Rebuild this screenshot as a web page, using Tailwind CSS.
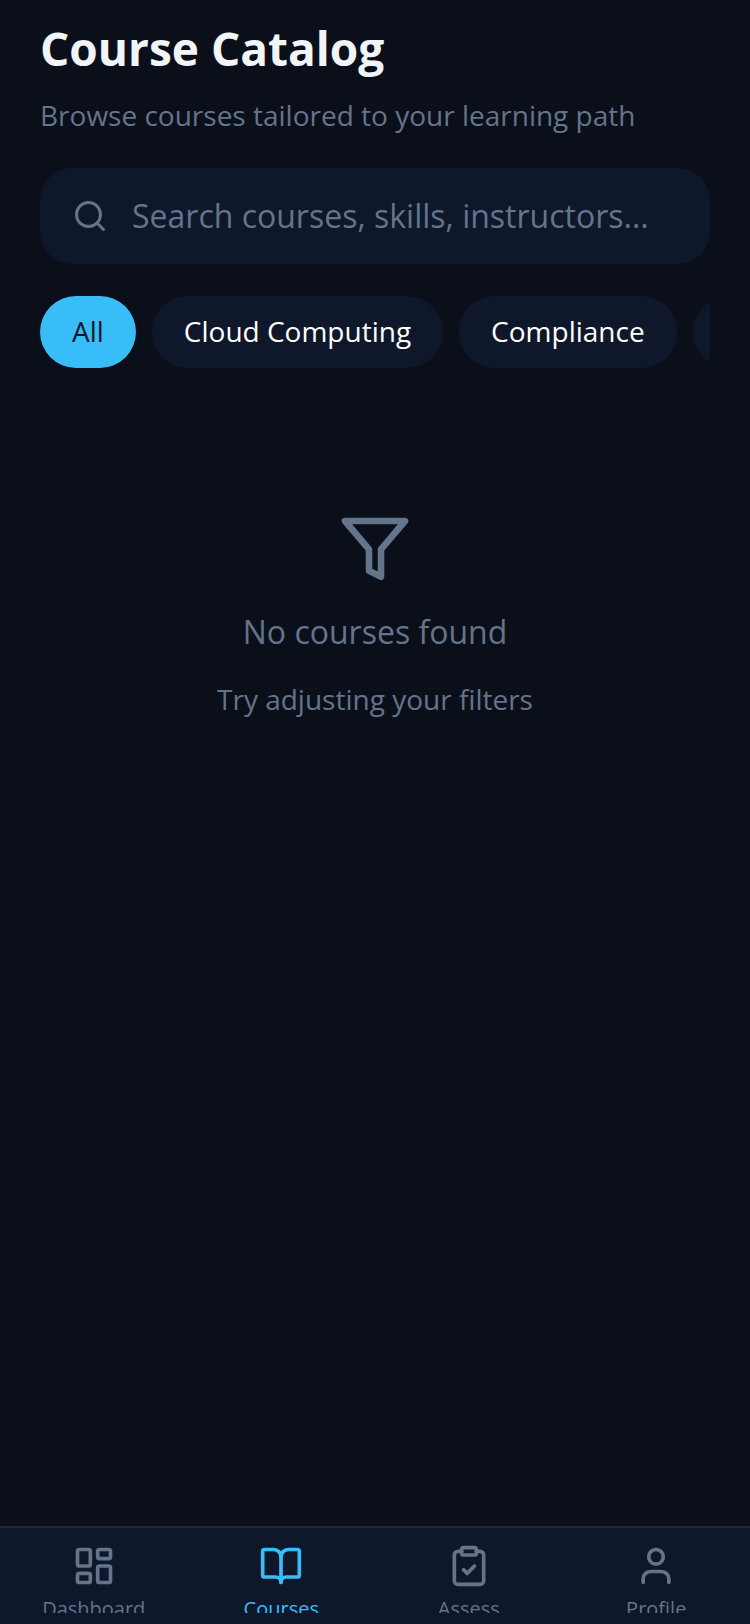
<!DOCTYPE html>
<html lang="en">
<head>
  <meta charset="UTF-8">
  <meta name="viewport" content="width=device-width, initial-scale=1">
  <title>Course Catalog</title>
  <script src="https://cdn.jsdelivr.net/npm/@tailwindcss/browser@4"></script>
</head>
<body class="bg-[#0a0f1a] font-['Open_Sans',sans-serif]">
  <div class="h-[1624px] flex flex-col overflow-hidden">
    <main class="flex-1 px-10 pt-[18px]">
      <h1 class="text-[46px] leading-[60px] font-bold text-[#f1f5f9]">Course Catalog</h1>
      <p class="mt-[18px] text-[28px] leading-[38px] text-[#64748b]">Browse courses tailored to your learning path</p>

      <!-- Search -->
      <div class="mt-[34px] h-24 rounded-[32px] bg-[#0f172a] flex items-center pl-8 pr-8 gap-6">
        <svg class="w-9 h-9 shrink-0 text-[#64748b]" viewBox="0 0 24 24" fill="none" stroke="currentColor" stroke-width="2" stroke-linecap="round" stroke-linejoin="round"><circle cx="11" cy="11" r="8"/><path d="m21 21-4.3-4.3"/></svg>
        <input type="text" placeholder="Search courses, skills, instructors..." class="flex-1 min-w-0 bg-transparent text-[32px] outline-none placeholder:text-[#64748b]">
      </div>

      <!-- Filter chips -->
      <div class="mt-8 flex gap-4 overflow-hidden">
        <button class="shrink-0 h-[72px] px-8 pb-[2px] rounded-[36px] bg-[#38bdf8] text-[#0f172a] text-[28px]">All</button>
        <button class="shrink-0 h-[72px] px-8 pb-[2px] rounded-[36px] bg-[#0f172a] text-white text-[28px]">Cloud Computing</button>
        <button class="shrink-0 h-[72px] px-8 pb-[2px] rounded-[36px] bg-[#0f172a] text-white text-[28px]">Compliance</button>
        <button class="shrink-0 h-[72px] px-8 pb-[2px] rounded-[36px] bg-[#0f172a] text-white text-[28px]">Cybersecurity</button>
      </div>

      <!-- Empty state -->
      <div class="mt-[144px] flex flex-col items-center">
        <svg class="w-[72px] h-[72px] text-[#64748b]" viewBox="0 0 24 24" fill="none" stroke="currentColor" stroke-width="2.2" stroke-linecap="round" stroke-linejoin="round"><polygon points="22 3 2 3 10 12.46 10 19.6 14 21.6 14 12.46 22 3"/></svg>
        <p class="mt-[26px] text-[32px] leading-[44px] text-[#64748b]">No courses found</p>
        <p class="mt-[26px] text-[28px] leading-[38px] text-[#64748b]">Try adjusting your filters</p>
      </div>
    </main>

    <!-- Bottom nav -->
    <nav class="h-[98px] shrink-0 border-t-2 border-[#1e293b] bg-[#0f172a] grid grid-cols-4 pt-4">
      <a class="flex flex-col items-center text-[#64748b]">
        <svg class="w-11 h-11" viewBox="0 0 24 24" fill="none" stroke="currentColor" stroke-width="2" stroke-linecap="round" stroke-linejoin="round"><rect width="7" height="9" x="3" y="3" rx="1"/><rect width="7" height="5" x="14" y="3" rx="1"/><rect width="7" height="9" x="14" y="12" rx="1"/><rect width="7" height="5" x="3" y="16" rx="1"/></svg>
        <span class="mt-[2px] h-[23px] overflow-hidden text-[20px] leading-[37px]">Dashboard</span>
      </a>
      <a class="flex flex-col items-center text-[#38bdf8]">
        <svg class="w-11 h-11" viewBox="0 0 24 24" fill="none" stroke="currentColor" stroke-width="2" stroke-linecap="round" stroke-linejoin="round"><path d="M12 7v14"/><path d="M3 18a1 1 0 0 1-1-1V4a1 1 0 0 1 1-1h5a4 4 0 0 1 4 4 4 4 0 0 1 4-4h5a1 1 0 0 1 1 1v13a1 1 0 0 1-1 1h-6a3 3 0 0 0-3 3 3 3 0 0 0-3-3z"/></svg>
        <span class="mt-[2px] h-[23px] overflow-hidden text-[20px] leading-[37px]">Courses</span>
      </a>
      <a class="flex flex-col items-center text-[#64748b]">
        <svg class="w-11 h-11" viewBox="0 0 24 24" fill="none" stroke="currentColor" stroke-width="2" stroke-linecap="round" stroke-linejoin="round"><rect width="8" height="4" x="8" y="2" rx="1" ry="1"/><path d="M16 4h2a2 2 0 0 1 2 2v14a2 2 0 0 1-2 2H6a2 2 0 0 1-2-2V6a2 2 0 0 1 2-2h2"/><path d="m9 14 2 2 4-4"/></svg>
        <span class="mt-[2px] h-[23px] overflow-hidden text-[20px] leading-[37px]">Assess</span>
      </a>
      <a class="flex flex-col items-center text-[#64748b]">
        <svg class="w-11 h-11" viewBox="0 0 24 24" fill="none" stroke="currentColor" stroke-width="2" stroke-linecap="round" stroke-linejoin="round"><path d="M19 21v-2a4 4 0 0 0-4-4H9a4 4 0 0 0-4 4v2"/><circle cx="12" cy="7" r="4"/></svg>
        <span class="mt-[2px] h-[23px] overflow-hidden text-[20px] leading-[37px]">Profile</span>
      </a>
    </nav>
  </div>
</body>
</html>
